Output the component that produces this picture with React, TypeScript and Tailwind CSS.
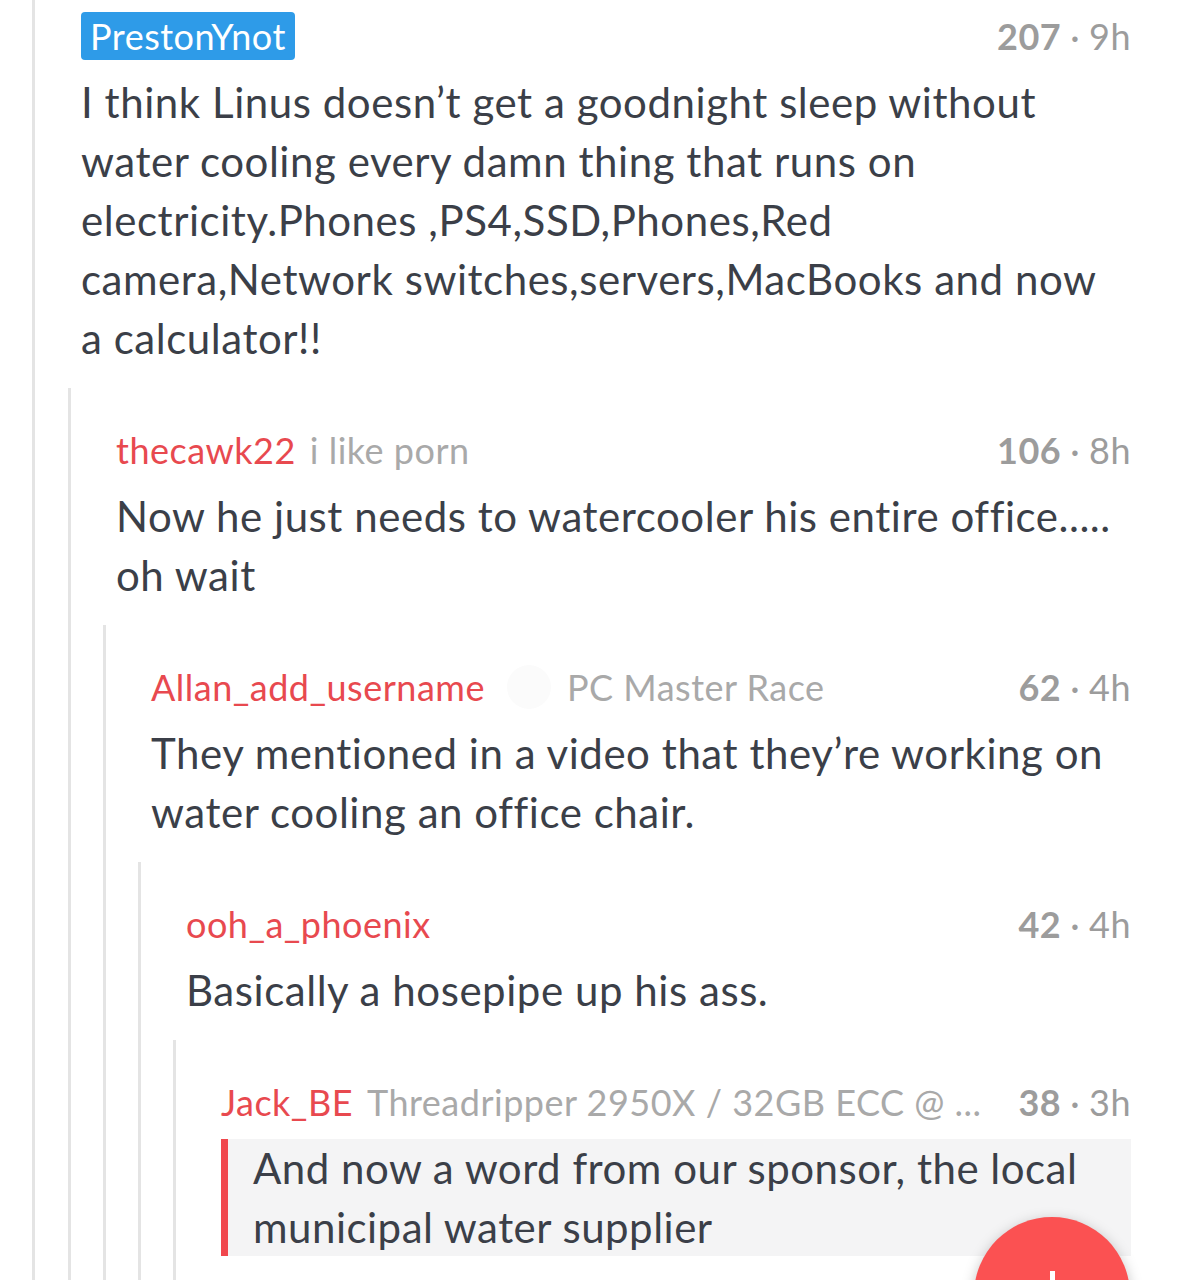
import React from "react";

type Node = {
  user: string;
  flair?: string;
  flairIcon?: boolean;
  score: number;
  age: string;
  lines: string[];
  badge?: boolean;
  quote?: boolean;
  child?: Node;
};

const thread: Node = {
  user: "PrestonYnot",
  badge: true,
  score: 207,
  age: "9h",
  lines: [
    "I think Linus doesn’t get a goodnight sleep without",
    "water cooling every damn thing that runs on",
    "electricity.Phones ,PS4,SSD,Phones,Red",
    "camera,Network switches,servers,MacBooks and now",
    "a calculator!!",
  ],
  child: {
    user: "thecawk22",
    flair: "i like porn",
    score: 106,
    age: "8h",
    lines: ["Now he just needs to watercooler his entire office.....", "oh wait"],
    child: {
      user: "Allan_add_username",
      flair: "PC Master Race",
      flairIcon: true,
      score: 62,
      age: "4h",
      lines: ["They mentioned in a video that they’re working on", "water cooling an office chair."],
      child: {
        user: "ooh_a_phoenix",
        score: 42,
        age: "4h",
        lines: ["Basically a hosepipe up his ass."],
        child: {
          user: "Jack_BE",
          flair: "Threadripper 2950X / 32GB ECC @ ...",
          score: 38,
          age: "3h",
          quote: true,
          lines: ["And now a word from our sponsor, the local", "municipal water supplier"],
        },
      },
    },
  },
};

const Header = ({ c }: { c: Node }) => (
  <div className="flex h-[48px] items-center whitespace-nowrap text-[36px] tracking-[0.5px]">
    {c.badge ? (
      <span className="rounded-[4px] bg-[#2e9be8] px-[9px] leading-[48px] text-white">{c.user}</span>
    ) : (
      <span className="shrink-0 text-[#e8494f]">{c.user}</span>
    )}
    {c.flairIcon && <span className="ml-[22px] h-[44px] w-[44px] shrink-0 rounded-full bg-[#fbfbfb]" />}
    {c.flair && (
      <span className={`${c.flairIcon ? "ml-[16px]" : "ml-[14px]"} min-w-0 overflow-hidden text-[#a9a9a9]`}>
        {c.flair}
      </span>
    )}
    <span className="ml-auto shrink-0 pl-[18px] text-[#9c9c9c]">
      <span className="font-bold">{c.score}</span>
      <span className="mx-[9px]">·</span>
      {c.age}
    </span>
  </div>
);

const Comment = ({ c, depth }: { c: Node; depth: number }) => {
  const body = c.lines.map((l, i) => (
    <React.Fragment key={i}>
      {l}
      {i < c.lines.length - 1 && <br />}
    </React.Fragment>
  ));

  return (
    <div
      className={
        depth === 0
          ? "ml-[32px] min-h-[1280px] border-l-[3px] border-[#e4e4e4] pl-[46px] pr-[47px] pt-[12px]"
          : "ml-[-13px] mt-[20px] border-l-[3px] border-[#e4e4e4] pl-[45px] pt-[38px]"
      }
    >
      <Header c={c} />
      {c.quote ? (
        <div className="mt-[13px] flex bg-[#f4f4f5]">
          <div className="w-[7px] shrink-0 bg-[#f0474d]" />
          <p className="whitespace-nowrap pl-[25px] text-[42px] leading-[58.5px] tracking-[0.5px] text-[#3b3f48]">
            {body}
          </p>
        </div>
      ) : (
        <p className="mt-[13px] whitespace-nowrap text-[42px] leading-[59px] tracking-[0.55px] text-[#3b3f48]">
          {body}
        </p>
      )}
      {c.child ? <Comment c={c.child} depth={depth + 1} /> : <div className="h-[40px]" />}
    </div>
  );
};

export default function App() {
  return (
    <div
      className="relative h-[1280px] w-[1178px] overflow-hidden bg-white"
      style={{ fontFamily: "Lato, 'Open Sans', sans-serif" }}
    >
      <Comment c={thread} depth={0} />
      <div className="absolute left-[974px] top-[1217px] h-[156px] w-[156px] rounded-full bg-[#fb5152] shadow-[0_4px_14px_rgba(0,0,0,0.25)]">
        <div className="absolute left-[76px] top-[54px] h-[40px] w-[5px] bg-white" />
        <div className="absolute left-[58px] top-[72px] h-[5px] w-[40px] bg-white" />
      </div>
    </div>
  );
}
